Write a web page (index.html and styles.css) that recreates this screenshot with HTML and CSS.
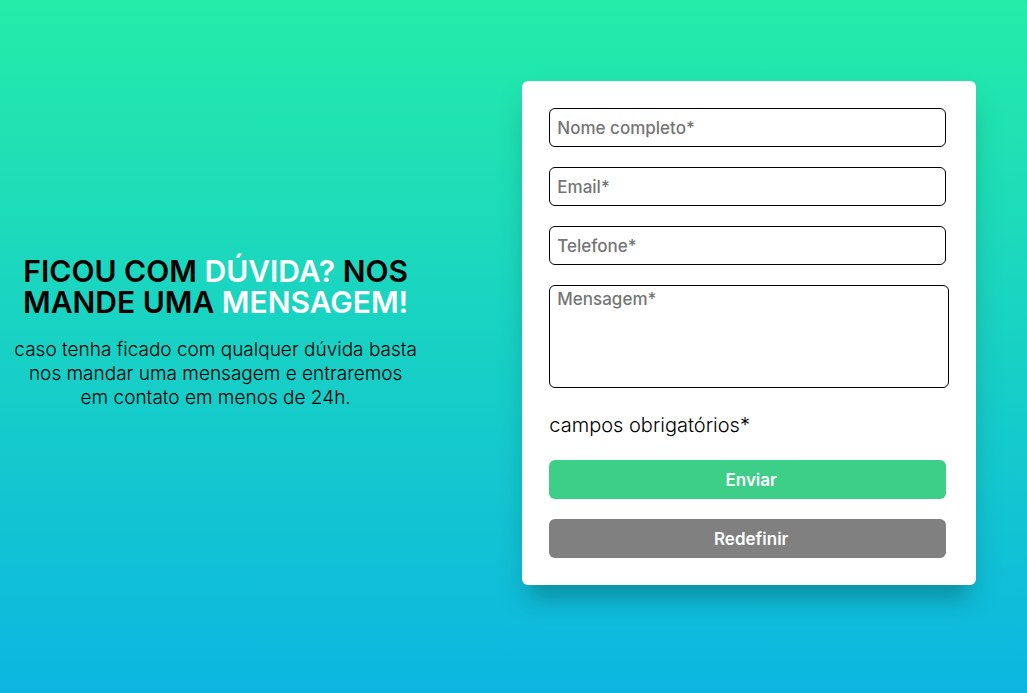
FILE: index.html
```html
<!DOCTYPE html>
<html lang="pt-BR">
<head>
<meta charset="utf-8">
<meta name="viewport" content="width=device-width, initial-scale=1">
<title>Contato</title>
<link rel="stylesheet" href="styles.css">
</head>
<body>
<main class="contact">
  <section class="intro">
    <h1 class="intro-title">FICOU COM <span class="highlight">DÚVIDA?</span> NOS<br>MANDE UMA <span class="highlight">MENSAGEM!</span></h1>
    <p class="intro-text">caso tenha ficado com qualquer dúvida basta<br>nos mandar uma mensagem e entraremos<br>em contato em menos de 24h.</p>
  </section>
  <form class="card">
    <input class="field" type="text" name="nome" placeholder="Nome completo*" aria-label="Nome completo" required>
    <input class="field" type="email" name="email" placeholder="Email*" aria-label="Email" required>
    <input class="field" type="tel" name="telefone" placeholder="Telefone*" aria-label="Telefone" required>
    <textarea class="field field-message" name="mensagem" placeholder="Mensagem*" aria-label="Mensagem" required></textarea>
    <p class="note">campos obrigatórios*</p>
    <button class="button button-send" type="submit">Enviar</button>
    <button class="button button-reset" type="reset">Redefinir</button>
  </form>
</main>
</body>
</html>
```
FILE: styles.css
```css
* {
  box-sizing: border-box;
  margin: 0;
  padding: 0;
}

body {
  min-height: 100vh;
  font-family: Inter, "Liberation Sans", sans-serif;
  color: #000;
  background: linear-gradient(180deg, #24eca8, #0cb6e1);
}

.contact {
  display: grid;
  grid-template-columns: 42% minmax(0, 1fr);
  align-items: center;
  min-height: 100vh;
  padding-bottom: 27px;
}

.intro {
  display: flex;
  flex-direction: column;
  gap: 20px;
  text-align: center;
}

.intro-title {
  font-size: 30px;
  font-weight: 600;
  line-height: 31px;
}

.highlight {
  color: #fff;
}

.intro-text {
  font-size: 19px;
  font-weight: 300;
  line-height: 24px;
}

.card {
  display: flex;
  flex-direction: column;
  gap: 20px;
  margin: 0 51px 0 91px;
  padding: 27px 30px 27px 27px;
  border-radius: 6px;
  background: #fff;
  box-shadow: 0 22px 20px -10px rgba(0, 0, 0, 0.17), 0 15px 30px rgba(0, 0, 0, 0.1);
}

.field {
  height: 39px;
  padding: 0 7px;
  border: 1px solid #000;
  border-radius: 6px;
  background: #fff;
  font-family: inherit;
  font-size: 17px;
  font-weight: 500;
}

.field::placeholder {
  color: #757575;
}

.field-message {
  height: 103px;
  margin-right: -3px;
  padding-top: 3px;
  resize: none;
}

.note {
  padding-top: 2px;
  font-size: 20px;
  font-weight: 300;
  line-height: 30px;
}

.button {
  height: 39px;
  padding-left: 7px;
  border: 0;
  border-radius: 6px;
  color: #fff;
  font-family: inherit;
  font-size: 17px;
  font-weight: 600;
}

.button-send {
  background: #3dce88;
}

.button-reset {
  background: #808080;
}
```
